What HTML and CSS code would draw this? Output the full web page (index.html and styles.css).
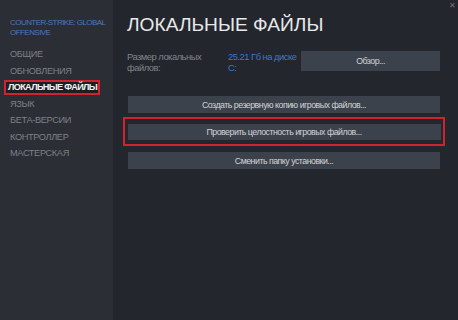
FILE: index.html
```html
<!DOCTYPE html>
<html lang="ru">
<head>
<meta charset="utf-8">
<link rel="stylesheet" href="styles.css">
</head>
<body>
<div class="window">
  <aside class="sidebar">
    <div class="game">COUNTER-STRIKE: GLOBAL<br>OFFENSIVE</div>
    <ul class="nav">
      <li>ОБЩИЕ</li>
      <li>ОБНОВЛЕНИЯ</li>
      <li class="active"><span>ЛОКАЛЬНЫЕ ФАЙЛЫ</span></li>
      <li>ЯЗЫК</li>
      <li>БЕТА-ВЕРСИИ</li>
      <li>КОНТРОЛЛЕР</li>
      <li>МАСТЕРСКАЯ</li>
    </ul>
  </aside>
  <main class="content">
    <div class="close">✕</div>
    <h1 class="title">ЛОКАЛЬНЫЕ ФАЙЛЫ</h1>
    <div class="info">
      <div class="label">Размер локальных файлов:</div>
      <div class="value">25.21 Гб на диске C:</div>
      <div class="btn browse">Обзор...</div>
    </div>
    <div class="actions">
      <div class="btn wide">Создать резервную копию игровых файлов...</div>
      <div class="highlight"><div class="btn wide">Проверить целостность игровых файлов...</div></div>
      <div class="btn wide">Сменить папку установки...</div>
    </div>
  </main>
</div>
</body>
</html>
```
FILE: styles.css
```css
html, body {
  margin: 0;
  padding: 0;
  width: 458px;
  height: 320px;
  overflow: hidden;
  background: #23262d;
  font-family: "Liberation Sans", Arial, sans-serif;
}
.window {
  display: flex;
  width: 458px;
  height: 320px;
}
.sidebar {
  width: 113px;
  flex: none;
  background: #2b2e34;
  padding-top: 18px;
  box-sizing: border-box;
}
.game {
  color: #4a78bd;
  font-size: 8px;
  line-height: 10px;
  letter-spacing: -0.55px;
  padding-left: 10px;
  white-space: nowrap;
}
.nav {
  list-style: none;
  margin: 8px 0 0 0;
  padding: 0;
}
.nav li {
  color: #7d8187;
  font-size: 9.2px;
  letter-spacing: -0.35px;
  height: 16.5px;
  line-height: 16.5px;
  padding-left: 10px;
  white-space: nowrap;
}
.nav li.active {
  padding-left: 4px;
  display: flex;
  align-items: center;
}
.nav li.active span {
  display: block;
  border: 2.5px solid #cf2330;
  background: #1d1f25;
  color: #f2f2f2;
  line-height: 10.5px;
  padding: 0 1px 0 2px;
  font-weight: bold;
  letter-spacing: -0.7px;
}
.content {
  flex: 1;
  position: relative;
  padding: 15px 18px 0 14px;
  box-sizing: border-box;
}
.close {
  position: absolute;
  top: 1px;
  right: 2px;
  color: #6d7178;
  font-size: 8px;
}
.title {
  margin: 0;
  font-weight: normal;
  color: #e8e9ea;
  font-size: 19.2px;
  line-height: 20px;
  letter-spacing: 0;
}
.info {
  display: flex;
  align-items: flex-start;
  height: 20px;
  margin-top: 16px;
}
.label {
  width: 101px;
  flex: none;
  color: #80848b;
  font-size: 9.4px;
  letter-spacing: -0.5px;
  line-height: 11px;
}
.value {
  width: 73px;
  flex: none;
  color: #3d76cc;
  font-size: 9.4px;
  letter-spacing: -0.5px;
  line-height: 11px;
}
.btn {
  background: #3c424c;
  color: #d2d3d5;
  font-size: 8.8px;
  letter-spacing: -0.5px;
  display: flex;
  align-items: center;
  justify-content: center;
  white-space: nowrap;
}
.browse {
  width: 139px;
  height: 20px;
}
.actions {
  margin-top: 25px;
  display: flex;
  flex-direction: column;
}
.wide {
  height: 17px;
  margin-left: 1px;
}
.highlight {
  margin: 4px -5px 6px -4px;
  border: 2.5px solid #cf2330;
  padding: 4.5px 2.5px;
}
.highlight .btn {
  margin-left: 0;
  height: 16px;
}
```
